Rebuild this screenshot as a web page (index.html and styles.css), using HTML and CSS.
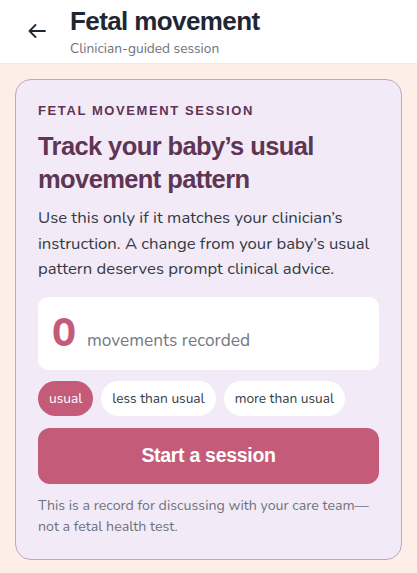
FILE: index.html
```html
<!DOCTYPE html>
<html lang="en">
<head>
<meta charset="utf-8">
<title>Fetal movement</title>
<link rel="stylesheet" href="styles.css">
</head>
<body>
<header class="topbar">
  <button class="back" aria-label="Back">
    <svg width="18" height="14" viewBox="0 0 18 14" fill="none" stroke="#1f2733" stroke-width="1.8" stroke-linecap="round" stroke-linejoin="round"><path d="M17 7H1.5M7.5 1L1.5 7l6 6"/></svg>
  </button>
  <div class="titles">
    <h1 class="title">Fetal movement</h1>
    <p class="subtitle">Clinician-guided session</p>
  </div>
</header>
<main class="page">
  <section class="card">
    <p class="eyebrow">FETAL MOVEMENT SESSION</p>
    <h2 class="heading">Track your baby’s usual movement pattern</h2>
    <p class="lead">Use this only if it matches your clinician’s instruction. A change from your baby’s usual pattern deserves prompt clinical advice.</p>
    <div class="counter">
      <span class="count">0</span>
      <span class="count-label">movements recorded</span>
    </div>
    <div class="chips">
      <span class="chip chip-active">usual</span>
      <span class="chip">less than usual</span>
      <span class="chip">more than usual</span>
    </div>
    <button class="primary">Start a session</button>
    <p class="note">This is a record for discussing with your care team—not a fetal health test.</p>
  </section>
</main>
</body>
</html>
```
FILE: styles.css
```css
* { box-sizing: border-box; }
html, body { margin: 0; padding: 0; }
body {
  background: #fdeee8;
  font-family: "Nunito", "Open Sans", "Noto Sans", sans-serif;
  color: #3a3f4a;
  width: 417px;
  min-height: 573px;
}
.topbar {
  background: #ffffff;
  height: 64px;
  display: flex;
  align-items: flex-start;
  border-bottom: 1px solid #eeeae8;
}
.back {
  background: none;
  border: 0;
  padding: 0;
  margin: 24px 0 0 28px;
  width: 18px;
  height: 14px;
  display: flex;
}
.titles { margin-left: 24px; padding-top: 6px; }
.title {
  margin: 0;
  font-family: "Liberation Sans", Arial, sans-serif;
  font-weight: 700;
  font-size: 26px;
  letter-spacing: -0.6px;
  line-height: 30px;
  color: #1f2733;
}
.subtitle {
  margin: 4px 0 0;
  font-size: 13.7px;
  line-height: 18px;
  color: #6d737d;
}
.page { padding: 15px 15px 16px; }
.card {
  background: #f3eaf7;
  border: 1px solid #bfa6c6;
  border-radius: 16px;
  padding: 22px 22px 22px;
}
.eyebrow {
  margin: 0;
  font-family: "Liberation Sans", Arial, sans-serif;
  font-weight: 700;
  font-size: 13px;
  letter-spacing: 1.6px;
  line-height: 18px;
  color: #5e3552;
}
.heading {
  margin: 10px 0 0;
  font-family: "Liberation Sans", Arial, sans-serif;
  font-weight: 700;
  font-size: 25.5px;
  letter-spacing: -0.6px;
  line-height: 33px;
  color: #5e3552;
}
.lead {
  margin: 9px 0 0;
  font-size: 16.7px;
  line-height: 25.5px;
  color: #343a44;
}
.counter {
  margin-top: 15px;
  background: #ffffff;
  border-radius: 10px;
  height: 73px;
  display: flex;
  align-items: baseline;
  padding: 14px 14px 0;
  gap: 11px;
}
.count {
  font-family: "Nunito", "Open Sans", sans-serif;
  font-weight: 800;
  font-size: 40px;
  line-height: 44px;
  color: #c45b78;
}
.count-label {
  font-size: 17.3px;
  color: #747a84;
}
.chips {
  margin-top: 11px;
  display: flex;
  gap: 8px;
}
.chip {
  background: #ffffff;
  border-radius: 18px;
  height: 35px;
  padding: 0 11px;
  display: flex;
  align-items: center;
  font-size: 13.7px;
  color: #343a44;
}
.chip-active {
  background: #c45b78;
  color: #ffffff;
}
.primary {
  margin-top: 12px;
  width: 100%;
  height: 56px;
  border: 0;
  border-radius: 12px;
  background: #c45b78;
  color: #ffffff;
  font-family: "Liberation Sans", Arial, sans-serif;
  font-weight: 700;
  font-size: 19.5px;
  letter-spacing: -0.3px;
}
.note {
  margin: 11px 0 0;
  font-size: 14.2px;
  line-height: 21px;
  color: #6d737d;
}
```
